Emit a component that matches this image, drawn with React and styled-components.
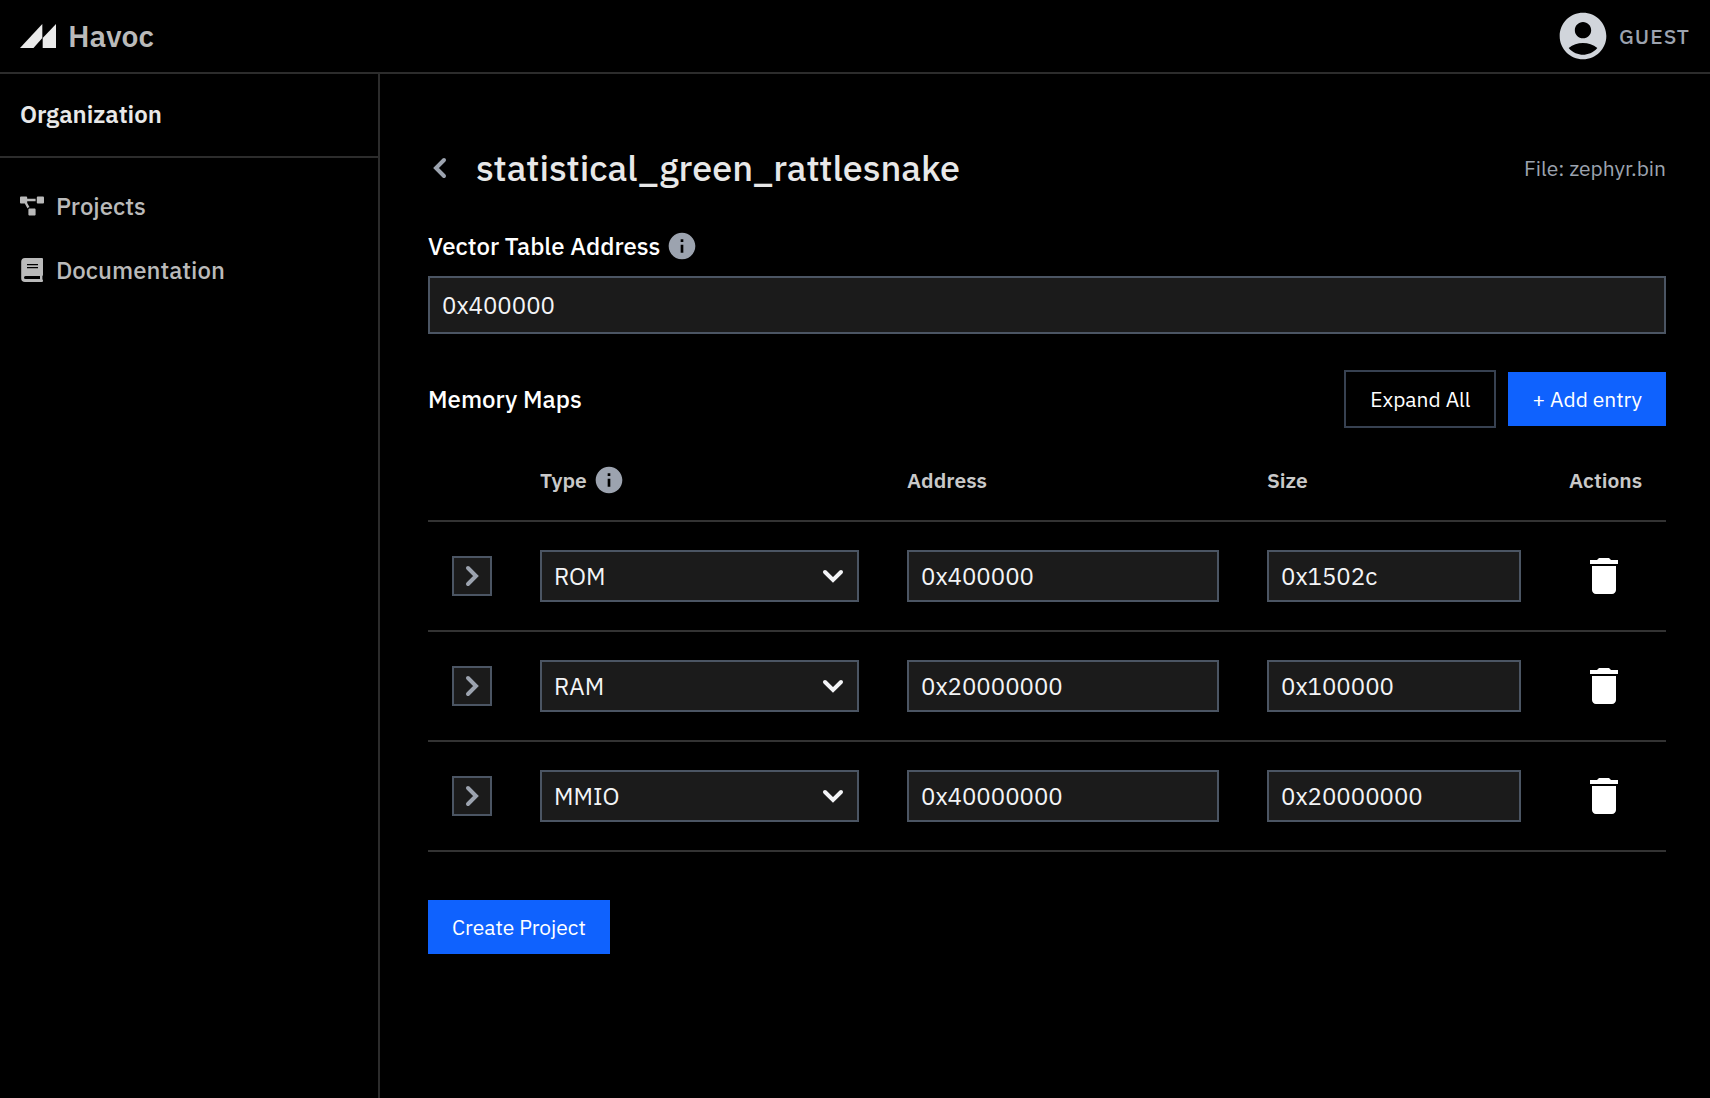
import React, { useState } from 'react';
import styled, { createGlobalStyle } from 'styled-components';
import { MdAccountCircle, MdDelete, MdInfo } from 'react-icons/md';
import { FaProjectDiagram } from 'react-icons/fa';

const GlobalStyle = createGlobalStyle`
*{
  box-sizing:border-box;
}
body{
  margin:0;
  background:#000;
  color:#e8e8e8;
  font-family:"IBM Plex Sans", Inter, "Noto Sans", sans-serif;
  font-size:24px;
  line-height:32px;
}
button, input, select{
  font:inherit;
  color:inherit;
}
`;

const Page = styled.div`
  display:flex;
  flex-direction:column;
  min-height:100vh;
`;

const Header = styled.header`
  display:flex;
  align-items:center;
  justify-content:space-between;
  height:74px;
  padding:0 20px;
  border-bottom:2px solid #2c2c2c;
`;

const Brand = styled.a`
  display:flex;
  align-items:center;
  gap:12px;
  color:#bababa;
  font-size:30px;
  font-weight:600;
  text-decoration:none;
`;

const User = styled.button`
  display:flex;
  align-items:center;
  gap:8px;
  padding:0;
  border:none;
  background:none;
  color:#9ca3af;
  font-size:21px;
  font-weight:500;
  letter-spacing:1px;
  svg{
    color:#d1d5db;
  }
`;

const Body = styled.div`
  display:flex;
  flex:1;
`;

const Sidebar = styled.aside`
  flex:0 0 380px;
  border-right:2px solid #2c2c2c;
`;

const SidebarTitle = styled.h2`
  margin:0;
  padding:24px 20px 26px;
  border-bottom:2px solid #2c2c2c;
  font-size:24px;
  font-weight:600;
`;

const Nav = styled.nav`
  display:flex;
  flex-direction:column;
  gap:32px;
  padding:32px 20px;
`;

const NavLink = styled.a`
  display:flex;
  align-items:center;
  gap:12px;
  color:#bababa;
  font-weight:500;
  text-decoration:none;
`;

const Main = styled.main`
  flex:1;
  min-width:0;
  padding:68px 44px 48px 48px;
`;

const TitleRow = styled.div`
  display:flex;
  align-items:center;
  gap:24px;
  height:52px;
`;

const BackButton = styled.button`
  display:flex;
  padding:0;
  border:none;
  background:none;
  color:#9ca3af;
`;

const Title = styled.h1`
  flex:1;
  margin:0;
  font-size:36px;
  font-weight:500;
`;

const FileName = styled.span`
  color:#9ca3af;
  font-size:21px;
`;

const Label = styled.label`
  display:flex;
  align-items:center;
  gap:6px;
  margin:36px 0 14px;
  color:#fff;
  font-weight:500;
  svg{
    color:#9ca3af;
  }
`;

const TextInput = styled.input`
  display:block;
  width:100%;
  height:${props => props.$tall ? "58px" : "52px"};
  padding:0 12px;
  border:2px solid #4b5563;
  border-radius:0;
  background:#1b1b1b;
  color:#f3f4f6;
`;

const SectionRow = styled.div`
  display:flex;
  align-items:center;
  gap:12px;
  margin:36px 0 12px;
`;

const SectionTitle = styled.h2`
  flex:1;
  margin:0;
  color:#fff;
  font-size:24px;
  font-weight:500;
`;

const Button = styled.button`
  padding:11px 24px;
  border:none;
  background:#0f62fe;
  color:#fff;
  font-size:21px;
  ${props => props.$outline && "border:2px solid #374151; background:none;"}
`;

const Table = styled.table`
  width:100%;
  margin-bottom:48px;
  table-layout:fixed;
  border-collapse:separate;
  border-spacing:0;
`;

const Col = styled.col`
  width:${props => props.$w}px;
`;

const Th = styled.th`
  height:82px;
  padding:0 24px;
  border-bottom:2px solid #333;
  color:#c9c9c9;
  font-size:21px;
  font-weight:600;
  text-align:left;
  white-space:nowrap;
`;

const ThLabel = styled.span`
  display:flex;
  align-items:center;
  gap:6px;
  svg{
    color:#9ca3af;
  }
`;

const Td = styled.td`
  padding:28px 24px;
  border-bottom:2px solid #333;
  vertical-align:middle;
`;

const ExpandButton = styled.button`
  display:flex;
  align-items:center;
  justify-content:center;
  width:40px;
  height:40px;
  padding:0;
  border:2px solid #4b5563;
  background:#1b1b1b;
  color:#9ca3af;
`;

const SelectBox = styled.div`
  display:grid;
  align-items:center;
  > *{
    grid-area:1 / 1;
  }
  svg{
    justify-self:end;
    margin-right:14px;
    color:#f3f4f6;
    pointer-events:none;
  }
`;

const Select = styled.select`
  width:100%;
  height:52px;
  padding:0 48px 0 12px;
  border:2px solid #4b5563;
  border-radius:0;
  background:#1b1b1b;
  color:#f3f4f6;
  appearance:none;
`;

const DeleteButton = styled.button`
  display:flex;
  padding:0 11px;
  border:none;
  background:none;
  color:#fff;
`;

const Logo = () => (
  <svg width="36" height="24" viewBox="0 0 36 24" fill="#ebebeb" aria-hidden="true">
    <path d="M0 24 L22.300 0 V14 L13.500 24 Z" />
    <path d="M22.700 14 L36 0 V24 H22.700 Z" />
  </svg>
);

const BookIcon = () => (
  <svg width="24" height="24" viewBox="0 0 24 24" fill="currentColor" aria-hidden="true">
    <path fillRule="evenodd" d="M5 0H22a1 1 0 0 1 1 1V17a1 1 0 0 1-.6.9V21.600A1 1 0 0 1 23 22.500V23a1 1 0 0 1-1 1H5a3.800 3.800 0 0 1-3.800-3.800V3.800A3.800 3.800 0 0 1 5 0ZM7 6v1.200H18V6ZM7 9v1.200H18V9ZM5.500 18a1.500 1.500 0 0 0 0 3H20V18Z" />
  </svg>
);

const paths = {
  left: "M16 4l-8 8 8 8",
  right: "M8 4l8 8-8 8",
  down: "M4 8l8 8 8-8",
};

const Chevron = ({ dir }) => (
  <svg width="24" height="24" viewBox="0 0 24 24" fill="none" stroke="currentColor" strokeWidth="4" strokeLinecap="round" aria-hidden="true">
    <path d={paths[dir]} />
  </svg>
);

const initialMaps = [
  { id: 1, type: "ROM", address: "0x400000", size: "0x1502c" },
  { id: 2, type: "RAM", address: "0x20000000", size: "0x100000" },
  { id: 3, type: "MMIO", address: "0x40000000", size: "0x20000000" },
];

const App = () => {
  const [vector, setVector] = useState("0x400000");
  const [maps, setMaps] = useState(initialMaps);

  const update = (id, name, value) => {
    setMaps(maps.map(m => m.id === id ? { ...m, [name]: value } : m));
  };

  const addEntry = () => {
    setMaps([...maps, { id: Date.now(), type: "ROM", address: "", size: "" }]);
  };

  return (
    <Page>
      <GlobalStyle />
      <Header>
        <Brand href="#"><Logo />Havoc</Brand>
        <User type="button"><MdAccountCircle size={56} />GUEST</User>
      </Header>
      <Body>
        <Sidebar>
          <SidebarTitle>Organization</SidebarTitle>
          <Nav>
            <NavLink href="#projects"><FaProjectDiagram size={24} />Projects</NavLink>
            <NavLink href="#docs"><BookIcon />Documentation</NavLink>
          </Nav>
        </Sidebar>
        <Main>
          <TitleRow>
            <BackButton type="button" aria-label="Back"><Chevron dir="left" /></BackButton>
            <Title>statistical_green_rattlesnake</Title>
            <FileName>File: zephyr.bin</FileName>
          </TitleRow>

          <Label htmlFor="vector">Vector Table Address <MdInfo size={32} /></Label>
          <TextInput $tall id="vector" value={vector} onChange={e => setVector(e.target.value)} />

          <SectionRow>
            <SectionTitle>Memory Maps</SectionTitle>
            <Button type="button" $outline>Expand All</Button>
            <Button type="button" onClick={addEntry}>+ Add entry</Button>
          </SectionRow>

          <Table>
            <colgroup>
              <Col $w={88} />
              <Col $w={367} />
              <Col $w={360} />
              <Col $w={302} />
              <Col $w={121} />
            </colgroup>
            <thead>
              <tr>
                <Th aria-label="Expand" />
                <Th><ThLabel>Type <MdInfo size={32} /></ThLabel></Th>
                <Th>Address</Th>
                <Th>Size</Th>
                <Th>Actions</Th>
              </tr>
            </thead>
            <tbody>
              {maps.map(m => (
                <tr key={m.id}>
                  <Td>
                    <ExpandButton type="button" aria-label="Expand row"><Chevron dir="right" /></ExpandButton>
                  </Td>
                  <Td>
                    <SelectBox>
                      <Select aria-label="Type" value={m.type} onChange={e => update(m.id, "type", e.target.value)}>
                        <option>ROM</option>
                        <option>RAM</option>
                        <option>MMIO</option>
                      </Select>
                      <Chevron dir="down" />
                    </SelectBox>
                  </Td>
                  <Td>
                    <TextInput aria-label="Address" value={m.address} onChange={e => update(m.id, "address", e.target.value)} />
                  </Td>
                  <Td>
                    <TextInput aria-label="Size" value={m.size} onChange={e => update(m.id, "size", e.target.value)} />
                  </Td>
                  <Td>
                    <DeleteButton type="button" aria-label="Delete" onClick={() => setMaps(maps.filter(x => x.id !== m.id))}>
                      <MdDelete size={48} />
                    </DeleteButton>
                  </Td>
                </tr>
              ))}
            </tbody>
          </Table>

          <Button type="button">Create Project</Button>
        </Main>
      </Body>
    </Page>
  );
};

export default App;
